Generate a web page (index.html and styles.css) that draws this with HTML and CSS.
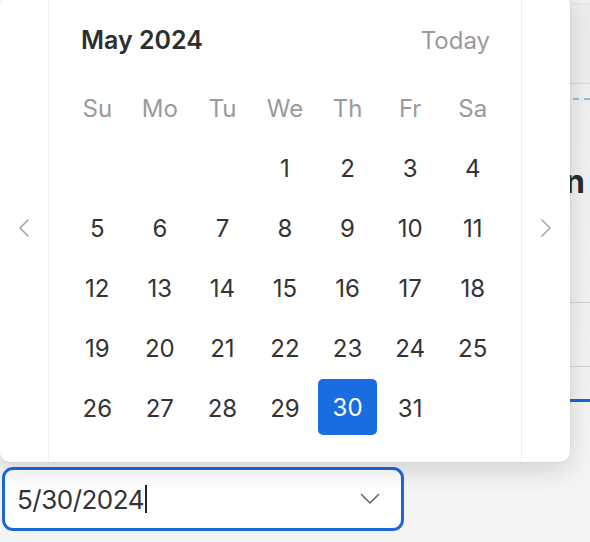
FILE: index.html
```html
<!DOCTYPE html>
<html lang="en">
<head>
<meta charset="utf-8">
<title>Date picker</title>
<link rel="stylesheet" href="styles.css">
</head>
<body>
<div class="app">
  <main class="main">
    <div class="field">
      <span class="field-value">5/30/2024</span><span class="caret"></span>
      <svg class="field-chevron" viewBox="0 0 20 12" width="20" height="12"><path d="M1.5 1.5 L10 10 L18.5 1.5" fill="none" stroke="#666" stroke-width="1.6" stroke-linecap="round" stroke-linejoin="round"/></svg>
    </div>
  </main>
  <aside class="panel">
    <div class="panel-head"></div>
    <div class="panel-dash"></div>
    <h2 class="panel-title">Plan</h2>
    <div class="panel-row"></div>
    <div class="panel-row short"></div>
    <div class="panel-tab"></div>
  </aside>
  <div class="popup">
    <div class="nav">
      <svg viewBox="0 0 12 20" width="12" height="20"><path d="M10 2 L2 10 L10 18" fill="none" stroke="#a6a6a6" stroke-width="1.6" stroke-linecap="round" stroke-linejoin="round"/></svg>
    </div>
    <div class="cal">
      <div class="cal-head">
        <span class="cal-title">May 2024</span>
        <span class="cal-today">Today</span>
      </div>
      <div class="cal-grid">
        <span class="wd">Su</span><span class="wd">Mo</span><span class="wd">Tu</span><span class="wd">We</span><span class="wd">Th</span><span class="wd">Fr</span><span class="wd">Sa</span>
        <span class="day"></span><span class="day"></span><span class="day"></span>
        <span class="day">1</span><span class="day">2</span><span class="day">3</span><span class="day">4</span>
        <span class="day">5</span><span class="day">6</span><span class="day">7</span><span class="day">8</span><span class="day">9</span><span class="day">10</span><span class="day">11</span>
        <span class="day">12</span><span class="day">13</span><span class="day">14</span><span class="day">15</span><span class="day">16</span><span class="day">17</span><span class="day">18</span>
        <span class="day">19</span><span class="day">20</span><span class="day">21</span><span class="day">22</span><span class="day">23</span><span class="day">24</span><span class="day">25</span>
        <span class="day">26</span><span class="day">27</span><span class="day">28</span><span class="day">29</span><span class="day"><span class="sel">30</span></span><span class="day">31</span><span class="day"></span>
      </div>
    </div>
    <div class="nav nav-next">
      <svg viewBox="0 0 12 20" width="12" height="20"><path d="M2 2 L10 10 L2 18" fill="none" stroke="#a6a6a6" stroke-width="1.6" stroke-linecap="round" stroke-linejoin="round"/></svg>
    </div>
  </div>
</div>
</body>
</html>
```

FILE: styles.css
```css
* { box-sizing: border-box; }
html, body { margin: 0; padding: 0; }
body {
  background: #f3f3f3;
  font-family: Inter, "Noto Sans", "Liberation Sans", sans-serif;
  color: #333;
}
.app {
  position: relative;
  width: 590px;
  height: 542px;
  overflow: hidden;
  display: flex;
  background: linear-gradient(180deg, #efefef 0%, #f5f5f5 100%);
}
.main {
  width: 540px;
  flex: none;
  display: flex;
  flex-direction: column;
  justify-content: flex-end;
  padding: 0 0 11px 2px;
}
.field {
  width: 402px;
  height: 64px;
  border: 3px solid #1c68d6;
  border-radius: 11px;
  background: #fff;
  display: flex;
  align-items: center;
  padding: 0 21px 0 12px;
}
.field-value {
  font-size: 26px;
  color: #333;
  letter-spacing: -0.5px;
}
.caret {
  width: 2px;
  height: 28px;
  background: #222;
  margin-left: 1px;
}
.field-chevron { margin-left: auto; }

.panel {
  flex: 1;
  min-width: 0;
  margin-top: 3px;
  border-top: 1px solid #e4e4e4;
  display: flex;
  flex-direction: column;
  align-items: stretch;
}
.panel-head {
  height: 80px;
  border-bottom: 1px solid #d6d6d6;
  background: #ededed;
}
.panel-dash {
  margin-top: 14px;
  border-top: 2px dashed #9cb6de;
}
.panel-title {
  margin: 62px 0 0;
  font-size: 32px;
  font-weight: 700;
  color: #2a2a2a;
  line-height: 40px;
  white-space: nowrap;
  display: flex;
  justify-content: flex-end;
  padding-right: 5px;
}
.panel-row {
  height: 101px;
  border-bottom: 1px solid #d2d2d2;
}
.panel-row.short { height: 64px; }
.panel-tab {
  margin-top: 32px;
  height: 3px;
  background: #1a66d0;
}

.popup {
  position: absolute;
  left: 0;
  top: -6px;
  width: 570px;
  height: 468px;
  background: #fff;
  border-radius: 10px;
  box-shadow: 0 8px 26px rgba(0, 0, 0, 0.14), 0 0 0 1px rgba(0, 0, 0, 0.04);
  display: flex;
}
.nav {
  width: 49px;
  flex: none;
  display: flex;
  align-items: center;
  justify-content: center;
  border-right: 1px solid #f0f0f0;
}
.nav-next {
  border-right: 0;
  border-left: 1px solid #f0f0f0;
}
.cal {
  flex: 1;
  padding: 18px 0 24px;
}
.cal-head {
  height: 56px;
  margin-bottom: 10px;
  display: flex;
  align-items: center;
  justify-content: space-between;
  padding: 0 31px 0 32px;
  font-size: 24px;
}
.cal-title { font-weight: 600; color: #2e2e2e; font-size: 25px; }
.cal-today { color: #9a9a9a; }
.cal-grid {
  display: grid;
  grid-template-columns: repeat(7, 1fr);
  grid-auto-rows: 60px;
  padding: 0 17px;
  font-size: 24px;
}
.wd, .day {
  display: flex;
  align-items: center;
  justify-content: center;
}
.wd { color: #9a9a9a; }
.day { color: #333; }
.sel {
  width: 59px;
  height: 56px;
  border-radius: 5px;
  background: #1a6de0;
  color: #fff;
  display: flex;
  align-items: center;
  justify-content: center;
  margin-top: -2px;
}
```
